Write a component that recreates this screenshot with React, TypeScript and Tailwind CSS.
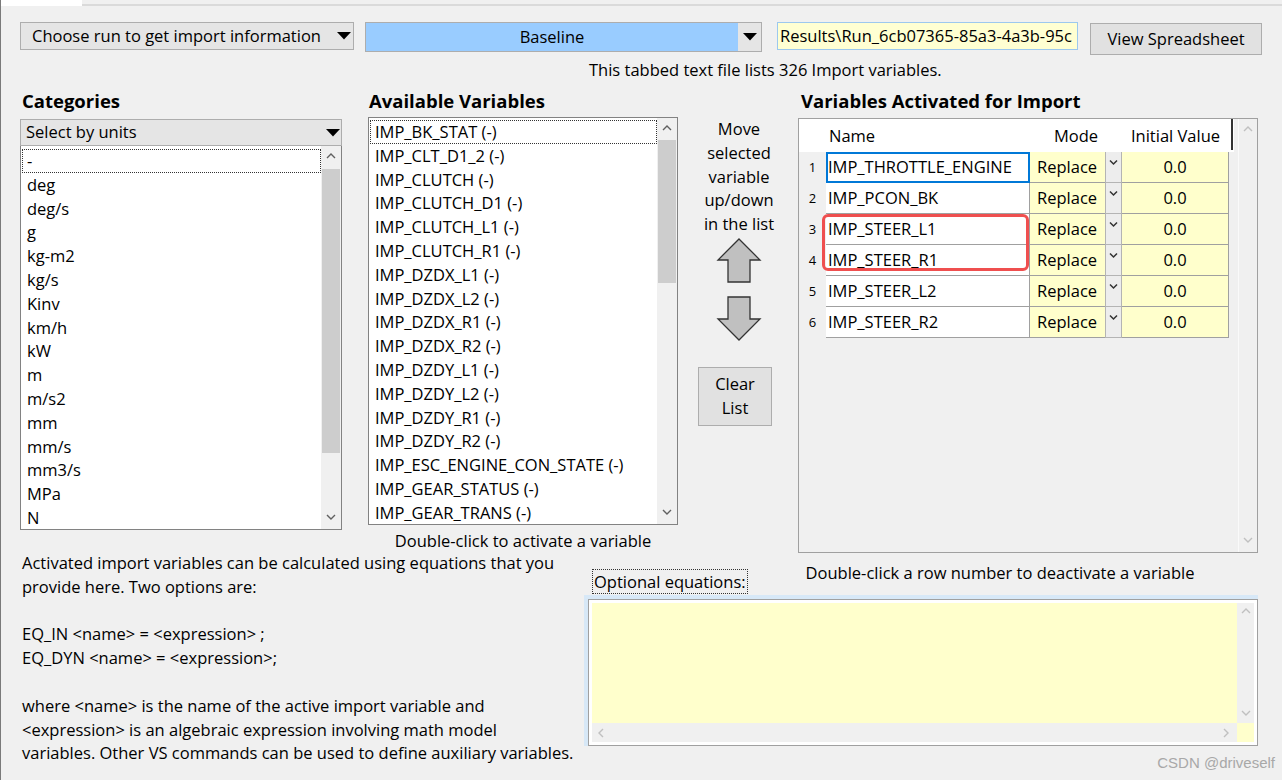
import React from 'react';

const Tri = () => (
  <svg width="14" height="8" viewBox="0 0 14 8"><polygon points="0,0 14,0 7,7.5" fill="#000" /></svg>
);

const Chev = ({ dir, color = '#606060' }: { dir: 'up' | 'down' | 'left' | 'right'; color?: string }) => {
  const pts =
    dir === 'up' ? '1,6 5,2 9,6' : dir === 'down' ? '1,2 5,6 9,2' : dir === 'left' ? '6,1 2,5 6,9' : '2,1 6,5 2,9';
  return (
    <svg width="10" height="10" viewBox="0 0 10 10">
      <polyline points={pts} fill="none" stroke={color} strokeWidth="1.4" />
    </svg>
  );
};

const units = ['-', 'deg', 'deg/s', 'g', 'kg-m2', 'kg/s', 'Kinv', 'km/h', 'kW', 'm', 'm/s2', 'mm', 'mm/s', 'mm3/s', 'MPa', 'N'];
const vars = [
  'IMP_BK_STAT (-)',
  'IMP_CLT_D1_2 (-)',
  'IMP_CLUTCH (-)',
  'IMP_CLUTCH_D1 (-)',
  'IMP_CLUTCH_L1 (-)',
  'IMP_CLUTCH_R1 (-)',
  'IMP_DZDX_L1 (-)',
  'IMP_DZDX_L2 (-)',
  'IMP_DZDX_R1 (-)',
  'IMP_DZDX_R2 (-)',
  'IMP_DZDY_L1 (-)',
  'IMP_DZDY_L2 (-)',
  'IMP_DZDY_R1 (-)',
  'IMP_DZDY_R2 (-)',
  'IMP_ESC_ENGINE_CON_STATE (-)',
  'IMP_GEAR_STATUS (-)',
  'IMP_GEAR_TRANS (-)',
];
const rows = ['IMP_THROTTLE_ENGINE', 'IMP_PCON_BK', 'IMP_STEER_L1', 'IMP_STEER_R1', 'IMP_STEER_L2', 'IMP_STEER_R2'];

const helpLines = [
  'Activated import variables can be calculated using equations that you',
  'provide here. Two options are:',
  '',
  'EQ_IN <name> = <expression> ;',
  'EQ_DYN <name> = <expression>;',
  '',
  'where <name> is the name of the active import variable and',
  '<expression> is an algebraic expression involving math model',
  'variables. Other VS commands can be used to define auxiliary variables.',
];

export default function App() {
  return (
    <div className="relative w-[1282px] h-[780px] overflow-hidden bg-[#f0f0f0] border-l border-[#7a7a7a] font-['Open_Sans',sans-serif] text-[16.5px] text-black">
      {/* tab strip */}
      <div className="flex h-[6px]">
        <div className="w-[81px] bg-white" />
        <div className="flex-1 border-b-2 border-[#dadada]" />
      </div>

      {/* top bar */}
      <div className="flex items-start pt-[16px] pl-[19px]">
        <div className="flex items-center justify-between w-[334px] h-[28px] bg-[#e5e5e5] border border-[#adadad] pl-[11px] pr-[2px]">
          <span className="whitespace-nowrap leading-[26px]">Choose run to get import information</span>
          <Tri />
        </div>
        <div className="flex ml-[11px] w-[397px] h-[30px] border border-[#adadad]">
          <div className="flex-1 flex items-center justify-center bg-[#99ccff]">Baseline</div>
          <div className="w-[23px] flex items-center justify-center bg-[#e5e5e5]">
            <Tri />
          </div>
        </div>
        <div className="ml-[15px] w-[301px] h-[28px] border border-[#9cc8ee] bg-[#ffffd2] overflow-hidden whitespace-nowrap pl-[2px] leading-[26px]">
          {'Results\\Run_6cb07365-85a3-4a3b-95c'}
        </div>
        <div className="ml-[12px] mt-[1px] w-[172px] h-[32px] flex items-center justify-center bg-[#e1e1e1] border border-[#adadad]">
          View Spreadsheet
        </div>
      </div>

      {/* info */}
      <div className="mt-[3px] pl-[588px] h-[24px] leading-[24px] whitespace-nowrap">
        This tabbed text file lists 326 Import variables.
      </div>

      {/* main row */}
      <div className="flex items-start mt-[8px] pl-[19px]">
        {/* categories */}
        <div className="w-[322px] flex flex-col">
          <div className="h-[29px] pl-[2px] text-[18.5px] font-bold leading-[22px]">Categories</div>
          <div className="flex items-center justify-between h-[27px] bg-[#e5e5e5] border border-[#adadad] pl-[5px] pr-[1px]">
            <span>Select by units</span>
            <Tri />
          </div>
          <div className="flex h-[384px] bg-white border border-t-0 border-[#828282]">
            <div className="flex-1 flex flex-col pt-[3px] pl-[1px]">
              {units.map((u, i) => (
                <div
                  key={u}
                  className={`h-[23.8px] leading-[21.8px] pl-[4px] border ${i === 0 ? 'border-dotted border-[#333]' : 'border-transparent'}`}
                >
                  {u}
                </div>
              ))}
            </div>
            <div className="w-[20px] flex flex-col items-center bg-[#f0f0f0] justify-between py-[6px] relative">
              <Chev dir="up" />
              <Chev dir="down" />
              <div className="absolute left-[1px] right-[1px] top-[23px] h-[284px] bg-[#cdcdcd]" />
            </div>
          </div>
        </div>

        {/* available variables */}
        <div className="ml-[26px] w-[310px] flex flex-col">
          <div className="h-[27px] pl-[1px] text-[18.5px] font-bold leading-[22px]">Available Variables</div>
          <div className="flex h-[408px] bg-white border border-[#828282]">
            <div className="flex-1 flex flex-col pt-[2px] pl-[1px]">
              {vars.map((v, i) => (
                <div
                  key={v}
                  className={`h-[23.8px] leading-[21.8px] pl-[4px] whitespace-nowrap border ${i === 0 ? 'border-dotted border-[#333]' : 'border-transparent'}`}
                >
                  {v}
                </div>
              ))}
            </div>
            <div className="w-[20px] flex flex-col items-center bg-[#f0f0f0] justify-between py-[6px] relative">
              <Chev dir="up" />
              <Chev dir="down" />
              <div className="absolute left-[1px] right-[1px] top-[22px] h-[143px] bg-[#cdcdcd]" />
            </div>
          </div>
          <div className="mt-[5px] leading-[22px] text-center whitespace-nowrap">Double-click to activate a variable</div>
        </div>

        {/* middle */}
        <div className="ml-[20px] w-[82px] flex flex-col pt-[27px]">
          <div className="text-center leading-[23.75px]">
            <div>Move</div>
            <div>selected</div>
            <div>variable</div>
            <div>up/down</div>
            <div className="whitespace-nowrap">in the list</div>
          </div>
          <svg className="mt-[2px] self-center" width="46" height="46" viewBox="0 0 46 46">
            <polygon points="23,1 44,22 34,22 34,44 12,44 12,22 2,22" fill="#c0c0c0" stroke="#333" strokeWidth="1.3" />
          </svg>
          <svg className="mt-[12px] self-center" width="46" height="46" viewBox="0 0 46 46">
            <polygon points="12,1 34,1 34,23 44,23 23,44 2,23 12,23" fill="#c0c0c0" stroke="#333" strokeWidth="1.3" />
          </svg>
          <div className="mt-[25px] w-[74px] h-[59px] flex flex-col items-center justify-center bg-[#e1e1e1] border border-[#adadad] leading-[24px]">
            <div>Clear</div>
            <div>List</div>
          </div>
        </div>

        {/* activated grid */}
        <div className="ml-[18px] flex flex-col">
          <div className="h-[28px] pl-[3px] text-[18.5px] font-bold leading-[22px] whitespace-nowrap">Variables Activated for Import</div>
          <div className="relative flex w-[460px] h-[435px] border border-[#a0a0a0] bg-[#f0f0f0]">
            <div className="w-[438px] flex flex-col">
              {/* header */}
              <div className="flex h-[33px]">
                <div className="w-[27px] bg-white" />
                <div className="w-[204px] bg-white pl-[3px] leading-[33px]">Name</div>
                <div className="w-[92px] bg-white text-center leading-[33px]">Mode</div>
                <div className="w-[107px] bg-white text-center leading-[33px] whitespace-nowrap">Initial Value</div>
                <div className="w-[5px] bg-white flex">
                  <div className="ml-[2px] w-[2px] h-[31px] bg-[#333]" />
                </div>
              </div>
              {rows.map((r, i) => (
                <div key={r} className="flex h-[31px]">
                  <div className="w-[27px] flex items-center justify-center text-[13px]">{i + 1}</div>
                  <div
                    className={`w-[204px] bg-white border-b border-r border-[#a0a0a0] ${i === 0 ? 'outline-2 -outline-offset-2 outline-[#0078d7]' : ''} pl-[2px] leading-[30px] whitespace-nowrap overflow-hidden`}
                  >
                    {r}
                  </div>
                  <div className="w-[75px] bg-[#ffffcc] border-b border-[#a0a0a0] pl-[7px] leading-[30px]">Replace</div>
                  <div className="w-[17px] bg-[#ededed] border-b border-l border-r border-[#b4b4b4] flex justify-center pt-[7px]">
                    <svg width="9" height="7" viewBox="0 0 9 7">
                      <polyline points="1,1.5 4.5,5 8,1.5" fill="none" stroke="#333" strokeWidth="1.5" />
                    </svg>
                  </div>
                  <div className="w-[107px] bg-[#ffffcc] border-b border-r border-[#a0a0a0] text-center leading-[30px]">0.0</div>
                </div>
              ))}
            </div>
            <div className="ml-[1px] w-[19px] flex flex-col items-center justify-between py-[6px] border-l border-[#fafafa]">
              <Chev dir="up" color="#c0c0c0" />
              <Chev dir="down" color="#c0c0c0" />
            </div>
            <div className="absolute left-[23px] top-[95px] w-[207px] h-[57px] border-[3px] border-[#ef4f4f] rounded-[6px]" />
          </div>
        </div>
      </div>

      {/* bottom */}
      <div className="flex pl-[21px]">
        <div className="w-[562px] -mt-[2px] leading-[23.8px] whitespace-nowrap">
          {helpLines.map((l, i) => (
            <div key={i} className="h-[23.8px]">
              {l}
            </div>
          ))}
        </div>
        <div className="w-[674px] flex flex-col">
          <div className="flex items-start pt-[9px]">
            <div className="ml-[8px] mt-[7px] h-[25px] px-[1px] border border-dotted border-[#333] leading-[23px] whitespace-nowrap">
              Optional equations:
            </div>
            <div className="ml-[58px] leading-[22px] whitespace-nowrap">Double-click a row number to deactivate a variable</div>
          </div>
          <div className="mt-[1px] h-[151px] flex flex-col bg-[#d7e8f7] pt-[4px] pl-[4px]">
            <div className="flex-1 flex flex-col border border-[#a0a0a0] bg-white p-[3px]">
              <div className="flex flex-1">
                <div className="flex-1 bg-[#ffffcc]" />
                <div className="w-[17px] bg-[#f0f0f0] flex flex-col items-center justify-between py-[4px]">
                  <Chev dir="up" color="#c0c0c0" />
                  <Chev dir="down" color="#c0c0c0" />
                </div>
              </div>
              <div className="flex h-[19px]">
                <div className="flex-1 bg-[#f0f0f0] flex items-center justify-between px-[5px]">
                  <Chev dir="left" color="#c0c0c0" />
                  <Chev dir="right" color="#c0c0c0" />
                </div>
                <div className="w-[17px] bg-[#ffffcc]" />
              </div>
            </div>
          </div>
        </div>
      </div>

      <div className="absolute right-[7px] bottom-[6px] text-[15px] text-[#a8a8a8] font-['Liberation_Sans',sans-serif]">CSDN @driveself</div>
    </div>
  );
}
